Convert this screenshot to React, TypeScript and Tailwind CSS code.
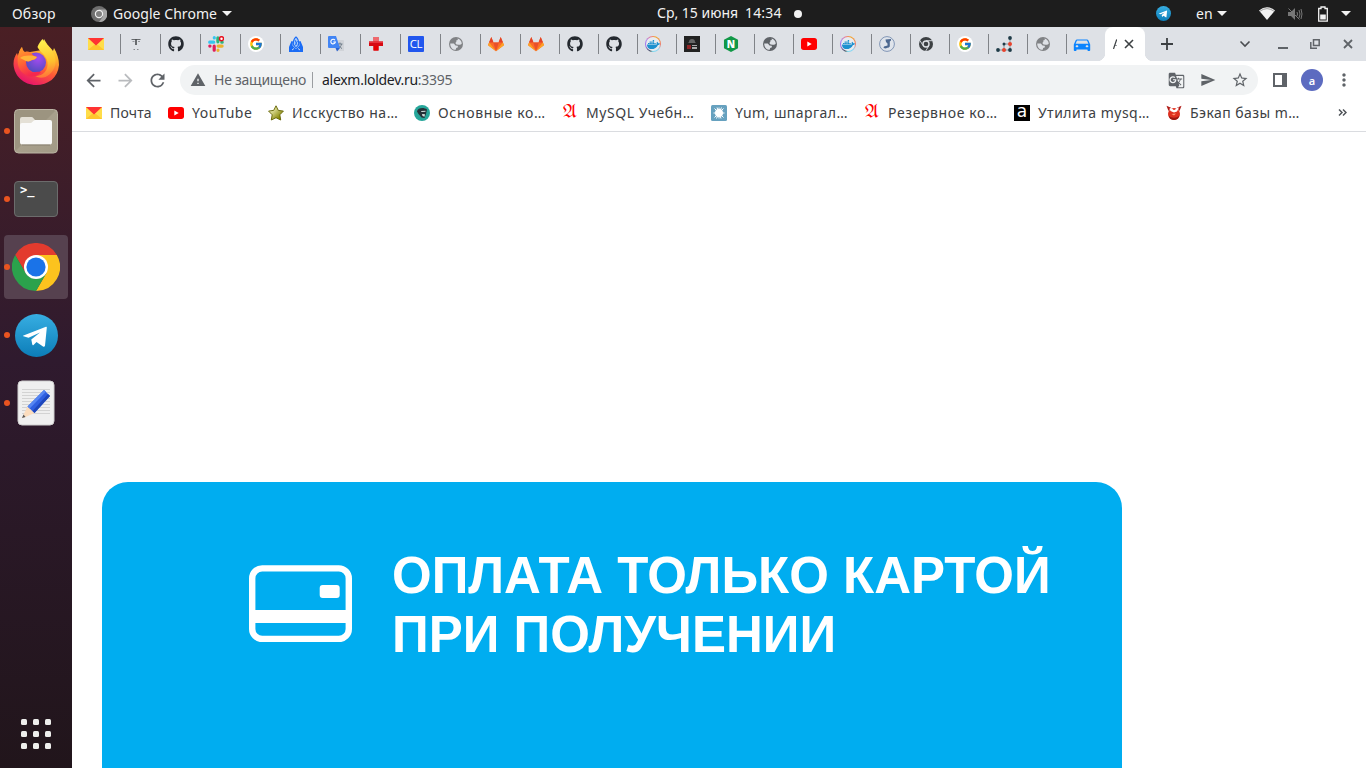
import React from "react";
import { FcGoogle } from "react-icons/fc";
import { FaGithub, FaDocker } from "react-icons/fa";
import { MdArrowBack, MdArrowForward, MdRefresh, MdWarning, MdGTranslate, MdSend, MdStarBorder, MdMoreVert, MdDirectionsCar } from "react-icons/md";

const MailIcon = () => (
  <svg viewBox="0 0 16 16" className="size-4">
    <rect y="2" width="16" height="12" fill="#ffc933" />
    <path d="M0 2v12l8-6zM16 2v12L8 8z" fill="#ffdd4a" />
    <path d="M0 14l6-5h4l6 5z" fill="#ffc62e" />
    <path d="M0 2h16L8 9.6z" fill="#f33" />
  </svg>
);

const MaskIcon = () => (
  <svg viewBox="0 0 16 16" className="size-4" stroke="#4a4d50" fill="none">
    <path d="M3.500 3.500h9" strokeOpacity=".8" />
    <path d="M4.500 5.500h2M10 5.500h2" strokeOpacity=".5" />
    <path d="M8 3v6" strokeWidth="1.600" />
    <path d="M5.500 13.500h1.500M9 13.500h1.500" strokeOpacity=".6" />
  </svg>
);

const SlackIcon = () => (
  <svg viewBox="0 0 16 16" className="size-4" strokeWidth="3.200" strokeLinecap="round">
    <path d="M1.700 6.200h4M6.300 1.700v.2" stroke="#36c5f0" />
    <path d="M9.900 1.800v4M13.800 6.200h.4" stroke="#2eb67d" />
    <path d="M14.100 10.100h-4M10 14.200v.1" stroke="#ecb22e" />
    <path d="M6.200 14.200v-4M1.800 10.100h.2" stroke="#e01e5a" />
    <circle cx="13.500" cy="2.700" r="2" fill="#fff" stroke="#e8101f" strokeWidth="1.500" />
  </svg>
);

const GoogleIcon = () => (
  <span className="flex size-4 items-center justify-center rounded-full bg-white">
    <FcGoogle className="size-[14px]" />
  </span>
);

const HandsIcon = () => (
  <svg viewBox="0 0 16 16" className="size-4">
    <path d="M1 16V11l2.500-6 1.500.5-.5 4L8 13l3.500-3.500-.5-4 1.500-.5L15 11v5z" fill="#1b6cf5" />
    <path d="M8 1C6 2.500 5 5 5.500 9L8 12l2.500-3C11 5 10 2.500 8 1z" fill="#a9cbfa" stroke="#1b6cf5" strokeWidth="1.100" />
    <path d="M7 4l2 5M9.500 5L6.500 10" stroke="#1b6cf5" strokeWidth=".9" />
    <path d="M4 14l2-1.500M12 14l-2-1.500" stroke="#dee1e6" strokeWidth=".9" />
  </svg>
);

const TranslateIcon = () => (
  <svg viewBox="0 0 16 16" className="size-4">
    <path d="M6 4h9a1 1 0 011 1v10H9z" fill="#d0d3d8" />
    <path d="M9.500 8h5M12 6.500v1.500M13.600 8c-.5 2-1.800 3.600-3.200 4.600M10.800 9.500l3.200 3.200" stroke="#6f7d8a" fill="none" />
    <path d="M1 0h7l4 12H1a1 1 0 01-1-1V1a1 1 0 011-1z" fill="#4285f4" />
    <path d="M7.500 12H12l-3 3.500z" fill="#2a62cf" />
    <path d="M7 4.200A2.300 2.300 0 107.400 6H5.300" stroke="#fff" strokeWidth="1.100" fill="none" />
  </svg>
);

const CrossIcon = () => (
  <svg viewBox="0 0 16 16" className="size-4">
    <path d="M5.500 1h5v4.500H15V10h-4.500v4.500h-5V10H1V5.500h4.500z" fill="#d60a12" />
    <path d="M5.500 1h5v4.500h-5z" fill="#f0686c" />
    <path d="M1 5.500h14V7H1z" fill="#e8323a" />
    <path d="M5.500 10h5v4.500h-5z" fill="#e60000" />
  </svg>
);

const ClIcon = () => (
  <span className="flex size-4 items-center justify-center rounded-[1px] bg-[#2156ee] font-['Open_Sans',sans-serif] text-[11.500px] leading-none tracking-[-0.3px] text-white">CL</span>
);

const Globe = ({ color }: { color: string }) => (
  <svg viewBox="0 0 16 16" className="size-4">
    <circle cx="8" cy="8" r="7" fill={color} />
    <path d="M9.600 2.400c2.600.8 4 2.700 4.200 5-1 1.300-2 1.600-3.100 1.300l-2.200-.1-1.200-1.500 1.100-1.300-.2-1.300 1.600-.5z" fill="#dee1e6" />
    <path d="M2.200 7.400l3.600.1 1.700 2.100 2.200.1.300 1.500-1.800.9-.5 1.700c-3 .1-5.400-2.400-5.500-6.400z" fill="#dee1e6" />
  </svg>
);
const GlobeGrey = () => <Globe color="#808285" />;
const GlobeDark = () => <Globe color="#5f6368" />;

const GitlabIcon = () => (
  <svg viewBox="0 0 16 16" className="size-4">
    <path d="M8 15.200L.4 9.600a.7.700 0 01-.3-.8L3.300 1l2.200 5.600h5L12.700 1l3.200 7.800a.7.700 0 01-.3.800z" fill="#fc6d26" />
    <path d="M3.300 1l2.200 5.600H1zM12.700 1l-2.200 5.600H15z" fill="#e24329" />
    <path d="M8 15.200L5.200 6.600h5.600z" fill="#e8502a" />
    <path d="M1.200 6.600L.1 8.800a.7.700 0 00.3.800L8 15.200zM14.800 6.600l1.100 2.200a.7.700 0 01-.3.800L8 15.200z" fill="#fca326" />
  </svg>
);

const GithubIcon = () => <FaGithub className="size-4 text-[#24292f]" />;

const DockerIcon = () => (
  <span className="flex size-4 items-center justify-center rounded-full bg-[conic-gradient(from_20deg,#f5a623,#f07a6a_20%,#8fd4f5_32%,#7bd9ee_45%,#384d54_50%,#9b6be8_65%,#b08af0_78%,#ef7b8b_90%,#f5a623)]">
    <span className="flex size-[14px] items-center justify-center rounded-full bg-[#e6ebf0]">
      <FaDocker className="size-[13px] text-[#1c90cf]" />
    </span>
  </span>
);

const DarkIcon = () => (
  <svg viewBox="0 0 16 16" className="size-4">
    <rect width="16" height="16" fill="#222" />
    <path d="M5 6c0-2 1-3 3-3s3 1 3 3l1 1H4z" fill="#666" />
    <path d="M3 9h4v4H3z" fill="#8f2426" />
    <path d="M8 9h5v1H8zM8 11h5v2H8z" fill="#a9a9a9" />
  </svg>
);

const NginxIcon = () => (
  <span className="flex size-4 items-center justify-center bg-[#119847] font-['Open_Sans',sans-serif] text-[10px] leading-none font-extrabold text-white [clip-path:polygon(50%_0,94%_24%,94%_76%,50%_100%,6%_76%,6%_24%)]">N</span>
);

const YoutubeIcon = () => (
  <svg viewBox="0 0 16 16" className="size-4">
    <rect y="2" width="16" height="12" rx="2.700" fill="#f00" />
    <path d="M6.300 5.500v5L10.700 8z" fill="#fff" />
  </svg>
);

const ElephantIcon = () => (
  <svg viewBox="0 0 16 16" className="size-4">
    <circle cx="8" cy="8" r="7.400" fill="#dfe4eb" stroke="#8095b5" />
    <path d="M6.500 3.500l5.500-.5v1.500l-1.200 1v4.500c0 2-3.300 1.500-3.800 2.500l-2.500-.5.500-1.500 3.500-1V7.500L7 6z" fill="#4c6890" />
  </svg>
);

const ChromeTab = () => (
  <svg viewBox="0 0 16 16" className="size-4">
    <circle cx="8" cy="8" r="7" fill="#3c4043" />
    <circle cx="8" cy="8" r="3.700" fill="#dee1e6" />
    <circle cx="8" cy="8" r="2.300" fill="#3c4043" />
    <path d="M8 4.700h6.500M5 9.600L1.900 4.400M10.900 9.700L7.600 15.200" stroke="#dee1e6" strokeWidth=".9" />
  </svg>
);

const DotsIcon = () => (
  <svg viewBox="0 0 16 16" className="size-4">
    <path d="M2 14h12V2M8 14V8h6" stroke="#6d7f87" strokeWidth=".8" fill="none" />
    <g fill="#1f3b47"><circle cx="2" cy="14" r="1.900" /><circle cx="14" cy="14" r="1.900" /><circle cx="14" cy="2" r="1.900" /><circle cx="8" cy="8" r="1.500" /></g>
    <g fill="#e8432e"><circle cx="8" cy="14" r="2" /><circle cx="14" cy="8" r="2" /></g>
  </svg>
);

const CarIcon = () => <MdDirectionsCar className="-ml-[2px] h-[19px] w-5 shrink-0 scale-x-115 scale-y-90 text-[#0a84ff]" />;

const wideTabs = [MailIcon, MaskIcon, GithubIcon, SlackIcon, GoogleIcon, HandsIcon, TranslateIcon, CrossIcon, ClIcon, GlobeGrey, GitlabIcon];
const narrowTabs = [GitlabIcon, GithubIcon, GithubIcon, DockerIcon, DarkIcon, NginxIcon, GlobeDark, YoutubeIcon, DockerIcon, ElephantIcon, ChromeTab, GoogleIcon, DotsIcon, GlobeGrey, CarIcon];

const StarIcon = () => (
  <svg viewBox="0 0 16 16" className="size-4">
    <defs><linearGradient id="olive" x1="0" y1="0" x2="1" y2="1"><stop offset=".2" stopColor="#f0f0b8" /><stop offset=".8" stopColor="#858500" /></linearGradient></defs>
    <path d="M8 .8l2.300 4.600 5.100.7-3.600 3.700.9 5.200L8 12.700 3.300 15l.9-5.200L.6 6.100l5.100-.7z" fill="url(#olive)" stroke="#6b6b0e" strokeLinejoin="round" />
  </svg>
);

const TealIcon = () => (
  <svg viewBox="0 0 16 16" className="size-4">
    <circle cx="8" cy="8" r="8" fill="#26a69a" />
    <path d="M3 6.500C3.500 2.500 10 2 13 4.500L12 9l-1.500 4-3-.5L4.500 9z" fill="#263238" />
    <path d="M7 6l4.500-.2v1L7.500 7zM8 9l3 .2-.5 2.500L8.500 11z" fill="#d7e3e2" />
  </svg>
);

const GothicA = () => (
  <span className="flex size-4 items-center justify-center font-['DejaVu_Math_TeX_Gyre','DejaVu_Sans',serif] text-[17px] leading-none text-[#f00]">𝔄</span>
);

const YumIcon = () => (
  <svg viewBox="0 0 16 16" className="size-4">
    <rect width="16" height="16" rx="1.500" fill="#66a1bf" />
    <circle cx="8" cy="8" r="4" fill="#fff" />
    <path d="M8 2.500v11M2.500 8h11M3.500 3.500l9 9M12.500 3.500l-9 9M6 2.500l4 11M10.500 2.500l-5 11" stroke="#fff" />
  </svg>
);

const BlackA = () => (
  <span className="flex size-4 items-center justify-center bg-black pb-[3px] font-['DejaVu_Sans',sans-serif] text-[17px] leading-none text-white">a</span>
);

const DevilIcon = () => (
  <svg viewBox="0 0 16 16" className="size-4">
    <path d="M.5.8l4.500 2L2.500 6zM15.500.8l-4.500 2L13.500 6z" fill="#b01a16" />
    <circle cx="8" cy="9" r="6" fill="#e0301f" />
    <path d="M2.500 10.500c1.500 6 9.500 6 11 0-3 3-8 3-11 0z" fill="#9a1712" />
    <path d="M3.500 3.500C6 2.500 7 5 8 5c1.500 0 2.500-3 5-2.500L11 6.500 8 7.500 4.500 6z" fill="#fff" />
    <path d="M5.500 9l4.500-.5-2 2z" fill="#ff9a78" />
  </svg>
);

const bookmarks = [
  { Icon: MailIcon, text: "Почта", box: "w-[82px]", track: "tracking-[0.15px]" },
  { Icon: YoutubeIcon, text: "YouTube", box: "w-[100px]", track: "tracking-[0.55px]" },
  { Icon: StarIcon, text: "Исскуство на…", box: "w-[146px]", track: "tracking-[0.55px]" },
  { Icon: TealIcon, text: "Основные ко…", box: "w-[148px]", track: "tracking-[0.7px]" },
  { Icon: GothicA, text: "MySQL Учебн…", box: "w-[149px]", track: "tracking-[0.55px]" },
  { Icon: YumIcon, text: "Yum, шпаргал…", box: "w-[153px]", track: "tracking-[0.45px]" },
  { Icon: GothicA, text: "Резервное ко…", box: "w-[150px]", track: "tracking-[0.6px]" },
  { Icon: BlackA, text: "Утилита mysq…", box: "w-[152px]", track: "tracking-[0.5px]" },
  { Icon: DevilIcon, text: "Бэкап базы m…", box: "w-[172px]", track: "tracking-[0.45px]" },
];

const Firefox = () => (
  <svg viewBox="0 0 48 48" className="size-12">
    <defs>
      <linearGradient id="ffBody" x1=".8" y1="0" x2=".3" y2="1"><stop stopColor="#fff44f" /><stop offset=".3" stopColor="#ffb32c" /><stop offset=".6" stopColor="#ff5a36" /><stop offset="1" stopColor="#e6106e" /></linearGradient>
      <linearGradient id="ffTail" x1=".5" y1="0" x2=".6" y2="1"><stop stopColor="#fff44f" /><stop offset=".6" stopColor="#ffc02e" /><stop offset="1" stopColor="#ff7139" /></linearGradient>
      <radialGradient id="ffGlobe" cx=".6" cy=".3" r=".8"><stop stopColor="#a44bf0" /><stop offset="1" stopColor="#4a4bb8" /></radialGradient>
      <linearGradient id="ffFox" x1="0" y1="0" x2=".4" y2="1"><stop stopColor="#ffa62b" /><stop offset=".5" stopColor="#ff6a33" /><stop offset="1" stopColor="#f5284f" /></linearGradient>
    </defs>
    <path d="M10 8c.5 3 1.500 5 3 6l5-1 12-2c0-4 .500-7 2-11 3 6 6 8 9 12l1-3c3 5 5 11 5 17-1 13-11 20-23 20S2 37 1.500 25c0-5 1.500-8 3.500-11l1 3c1-4 2-7 4-9z" fill="url(#ffBody)" />
    <circle cx="24" cy="23.500" r="10" fill="url(#ffGlobe)" />
    <path d="M30.500 0c4 7 11 10 13 20 1 9-4 15-10 18-4 1-7 1-10-1 8 0 13-6 12-14-1-7-8-10-10-15 1-3 3-6 5-8z" fill="url(#ffTail)" />
    <path d="M10 8c.5 3 1.500 4 3 5 3-1 6 0 7 2 1 2 4 2 5 3-1 2-3 3-5 3-2 1-3 2-6 1-2 4 0 9 5 11 4 1 6-1 10 0-4 6-13 6-18 1-5-4-6-10-5-17 1-4 2-7 4-9z" fill="url(#ffFox)" />
    <path d="M8 19c4-3 11-3 17-1-1 2-3 3-5 3-2 1-3 2-6 1z" fill="#ffb43a" />
  </svg>
);

const Files = () => (
  <svg viewBox="0 0 48 48" className="size-12">
    <defs><linearGradient id="fileBg" x1="0" y1="0" x2="1" y2="1"><stop stopColor="#9c9480" /><stop offset=".48" stopColor="#9c9480" /><stop offset=".5" stopColor="#a8a08c" /><stop offset="1" stopColor="#a29a86" /></linearGradient></defs>
    <rect x="2.500" y="2.500" width="43" height="43.500" rx="4" fill="url(#fileBg)" stroke="#bbb5a4" />
    <path d="M8 18v-6q0-2 2-2h9.500q1 0 2 1.300l1.500 1.700v5z" fill="#e4e0d6" />
    <path d="M8 18q0-2 2-2h8.500q1 0 2-1.200T23 13h15q2 0 2 2v20.500q0 2-2 2H10q-2 0-2-2z" fill="#fafafa" />
    <path d="M10 38h28" stroke="#81796a" strokeWidth=".8" />
  </svg>
);

const Terminal = () => (
  <div className="flex h-9 w-11 items-start rounded-[4px] border border-[#6c6c6c] bg-[#4b4b4b] pt-px pl-[5px] font-['DejaVu_Sans_Mono',monospace] text-[12px] leading-[15px] font-bold text-white">&gt;_</div>
);

const Chrome = () => (
  <svg viewBox="0 0 48 48" className="size-12">
    <path d="M24 12h20.800A24 24 0 0124 48l10.400-18z" fill="#fcc31e" />
    <path d="M3.200 12l10.400 18L24 24 24 12h20.800A24 24 0 003.200 12z" fill="#e33b2e" />
    <path d="M3.200 12l10.400 18c3 5 11 9 20.800 0L24 48A24 24 0 013.200 12z" fill="#2ba24c" />
    <circle cx="24" cy="24" r="12" fill="#fff" />
    <circle cx="24" cy="24" r="9.600" fill="#1a73e8" />
  </svg>
);

const Telegram = ({ className }: { className: string }) => (
  <svg viewBox="0 0 43 43" className={className}>
    <defs><linearGradient id="tg" x1="0" y1="0" x2="0" y2="1"><stop stopColor="#37aee2" /><stop offset="1" stopColor="#0c7db8" /></linearGradient></defs>
    <circle cx="21.500" cy="21.500" r="21.500" fill="url(#tg)" />
    <path d="M8.500 21.500L31 12.800q1-.2.800 1L30 31.800q-.5 1.500-2 .8l-6.500-4.600-3 3q-1 .9-1.300-1l-.9-4.400L25 18.500l-11.500 5.300-5-1.500q-1.400-.2 0-.8z" fill="#fff" />
  </svg>
);

const Editor = () => (
  <svg viewBox="0 0 48 48" className="size-12">
    <rect x="6" y="2" width="36" height="44" rx="4" fill="#efefef" stroke="#cfcfcf" />
    <path d="M10 10.500h28M10 13.500h28M10 16.500h28M10 19.500h28M10 22.500h28M10 25.500h28M10 28.500h28M10 31.500h28M10 34.500h28" stroke="#ccc" strokeWidth=".8" />
    <path d="M15.500 27.500l7 6.500-9.500 4.300-3 .5z" fill="#fbdcbd" />
    <path d="M11.500 35.500l2 2.500-3.500 1z" fill="#555" />
    <path d="M15.500 27.500L32 11l6 6-15.500 17z" fill="#2f5fe0" />
    <path d="M15.500 27.500L32 11l2 1.800-16.300 16.700z" fill="#5585f2" />
    <path d="M20.500 32L36 15l2 2-15.500 17z" fill="#1d46bb" />
  </svg>
);

const dock = [
  { name: "firefox", icon: <Firefox />, running: false, active: false },
  { name: "files", icon: <Files />, running: true, active: false },
  { name: "terminal", icon: <Terminal />, running: true, active: false },
  { name: "chrome", icon: <Chrome />, running: true, active: true },
  { name: "telegram", icon: <Telegram className="size-[43px]" />, running: true, active: false },
  { name: "editor", icon: <Editor />, running: true, active: false },
];

const Caret = () => <svg viewBox="0 0 10 5" className="h-[5px] w-[10px]"><path d="M0 0h10L5 5z" fill="#f2f2f2" /></svg>;

function TopBar() {
  return (
    <header className="grid h-[27px] shrink-0 grid-cols-[657px_1fr_210px] items-center bg-[#1d1d1d] text-[14px] leading-none text-[#f2f2f2]">
      <div className="flex items-center pl-3">
        <span className="w-[79px] tracking-[0.2px] whitespace-nowrap">Обзор</span>
        <svg viewBox="0 0 16 16" className="size-4">
          <circle cx="8" cy="8" r="8" fill="#6e6e6e" />
          <path d="M8 3.500h7A8 8 0 018 16l4-5.500z" fill="#a6a6a6" />
          <circle cx="8" cy="8" r="3.600" fill="#808080" stroke="#f0f0f0" strokeWidth="1.200" />
        </svg>
        <span className="ml-[6px] w-[109px] tracking-[0.05px] whitespace-nowrap">Google Chrome</span>
        <Caret />
      </div>
      <div className="flex items-center">
        <span className="w-[88px] pb-[2px] whitespace-nowrap">Ср, 15 июня</span>
        <span className="w-[49px] pb-[2px] tracking-[0.15px] whitespace-nowrap">14:34</span>
        <span className="size-2 rounded-full bg-[#f2f2f2]" />
      </div>
      <div className="flex items-center">
        <Telegram className="size-[15px]" />
        <span className="ml-[25px] w-[21px]">en</span>
        <Caret />
        <svg viewBox="0 0 16 13" className="ml-[32px] h-[13px] w-4"><path d="M0 3.500Q8-3 16 3.500L8 13z" fill="#f2f2f2" /><path d="M1 4.200Q8-1 15 4.200" stroke="#1d1d1d" strokeWidth=".8" fill="none" opacity=".5" /></svg>
        <svg viewBox="0 0 16 14" className="ml-3 h-[14px] w-4"><path d="M1 5h3l4-4v12L4 9H1z" fill="#777" /><path d="M10 5q1 2 0 4M12 3q2 4 0 8M14 2q2 5 0 10M1.500 1.500l11 11" stroke="#777" fill="none" /></svg>
        <svg viewBox="0 0 10 16" className="ml-[15px] h-4 w-[10px]"><path d="M3 1h4v1.500h2.300v12.700H.700V2.500H3z" fill="none" stroke="#f2f2f2" strokeWidth="1.300" /><path d="M2.200 8.500h5.600v5H2.200z" fill="#f2f2f2" /></svg>
        <span className="ml-[13px]"><Caret /></span>
      </div>
    </header>
  );
}

function Dock() {
  return (
    <nav className="flex w-[72px] shrink-0 flex-col items-center bg-linear-to-b from-[#4a1f24] via-[#2f1a2e] via-45% to-[#21151b] pt-1">
      <div className="flex flex-col gap-1">
        {dock.map((d) => (
          <div key={d.name} className={d.active ? "relative flex size-16 items-center justify-center rounded-[4px] bg-[#56414f]" : "relative flex size-16 items-center justify-center"}>
            {d.running && <span className="absolute top-[29px] left-0 size-[6px] rounded-full bg-[#e95420]" />}
            {d.icon}
          </div>
        ))}
      </div>
      <div className="mt-auto mb-[19px] grid grid-cols-3 gap-[6px]">
        {[0, 1, 2, 3, 4, 5, 6, 7, 8].map((i) => <span key={i} className="size-[6px] rounded-[1.500px] bg-[#eeeeec]" />)}
      </div>
    </nav>
  );
}

function Tab({ Icon, first, width }: { Icon: React.ComponentType; first?: boolean; width: string }) {
  return (
    <div className={`${width} flex h-5 shrink-0 items-center border-l pl-[7px] ${first ? "border-transparent" : "border-[#808388]"}`}>
      <Icon />
    </div>
  );
}

function TabStrip() {
  return (
    <div className="flex h-[34px] items-center bg-[#dee1e6] pl-2 text-[#3c4043]">
      {wideTabs.map((Icon, i) => <Tab key={i} Icon={Icon} first={i === 0} width="w-10" />)}
      {narrowTabs.map((Icon, i) => <Tab key={i} Icon={Icon} width="w-[39px]" />)}
      <div className="relative flex h-[34px] w-10 shrink-0 items-center rounded-t-[8px] bg-white pl-2">
        <span className="absolute bottom-0 -left-2 size-2 bg-[radial-gradient(circle_at_0_0,#dee1e6_8px,#fff_8.500px)]" />
        <span className="absolute -right-2 bottom-0 size-2 bg-[radial-gradient(circle_at_100%_0,#dee1e6_8px,#fff_8.500px)]" />
        <svg viewBox="0 0 4 10" className="h-[10px] w-1 shrink-0" fill="none" stroke="#3c4043"><path d="M.5 10L3.700.5" strokeWidth="1.200" /><path d="M1.800 6.500H4" strokeOpacity=".5" /></svg>
        <svg viewBox="0 0 10 10" className="ml-[7px] size-[10px] shrink-0" stroke="#3c4043" strokeWidth="1.600"><path d="M1 1l8 8M9 1L1 9" /></svg>
      </div>
      <svg viewBox="0 0 12 12" className="ml-4 size-3 shrink-0" stroke="#3c4043" strokeWidth="1.800"><path d="M6 0v12M0 6h12" /></svg>
      <svg viewBox="0 0 12 8" className="ml-[66px] h-2 w-3 shrink-0" fill="none" stroke="#4a4d51" strokeWidth="1.600"><path d="M1.500 1.500L6 6l4.500-4.500" /></svg>
      <span className="mt-2 ml-[27px] h-[2px] w-[10px] bg-[#5f6368]" />
      <svg viewBox="0 0 10 10" className="ml-[22px] size-[10px]" fill="none" stroke="#5f6368" strokeWidth="1.500"><path d="M3.500.8h5.700v5.700H3.500zM.8 3v6.200H7" /></svg>
      <svg viewBox="0 0 10 10" className="ml-[23px] size-[10px]" stroke="#5f6368" strokeWidth="1.800"><path d="M1 1l8 8M9 1L1 9" /></svg>
    </div>
  );
}

function Toolbar() {
  return (
    <div className="flex h-[38px] items-center pl-[11px] text-[14px] leading-none text-[#5f6368]">
      <MdArrowBack className="size-[21px] shrink-0" />
      <MdArrowForward className="ml-[11px] size-[21px] shrink-0 text-[#b9bbbe]" />
      <MdRefresh className="ml-[11px] size-[21px] shrink-0" />
      <div className="ml-3 flex h-[30px] w-[1078px] shrink-0 items-center rounded-full bg-[#f1f3f4] pl-[10px]">
        <MdWarning className="size-4" />
        <span className="ml-2 w-[98px] tracking-[-0.25px] whitespace-nowrap">Не защищено</span>
        <span className="h-4 w-px bg-[#9a9da1]" />
        <span className="ml-[9px] flex-1 tracking-[-0.28px] whitespace-nowrap"><span className="text-[#202124]">alexm.loldev.ru</span>:3395</span>
        <MdGTranslate className="size-[17px]" />
        <MdSend className="ml-[15px] size-4" />
        <MdStarBorder className="mr-[9px] ml-[15px] size-[18px]" />
      </div>
      <svg viewBox="0 0 14 14" className="ml-[15px] size-[14px] shrink-0"><path d="M1 1h12v12H1z" fill="none" stroke="#5f6368" strokeWidth="2" /><path d="M9 1h4v12H9z" fill="#5f6368" /></svg>
      <span className="ml-[14px] flex size-[22px] shrink-0 items-center justify-center rounded-full bg-[#5c6bc0] text-[11px] font-semibold text-white">a</span>
      <MdMoreVert className="ml-[11px] size-5 shrink-0" />
    </div>
  );
}

function Bookmarks() {
  return (
    <div className="flex h-[33px] items-center border-b border-[#dadce0] pb-[5px] pl-[14px] text-[14px] leading-none text-[#3c4043]">
      {bookmarks.map(({ Icon, text, box, track }) => (
        <div key={text} className={`${box} flex shrink-0 items-center gap-2`}>
          <span className="shrink-0"><Icon /></span>
          <span className={`${track} whitespace-nowrap`}>{text}</span>
        </div>
      ))}
      <svg viewBox="0 0 9 7" className="size-[9px]" fill="none" stroke="#4f5358" strokeWidth="1.500"><path d="M1 .5l3 3-3 3M5 .5l3 3-3 3" /></svg>
    </div>
  );
}

function PaymentCard() {
  return (
    <section className="mt-[350px] ml-[30px] flex h-[400px] w-[1020px] items-start rounded-[26px] bg-[#00adf0] pt-16 pl-[147px]">
      <svg viewBox="0 0 103 77" className="mt-[19px] h-[77px] w-[103px] shrink-0">
        <rect x="3.200" y="3.400" width="96.600" height="70.600" rx="10" fill="none" stroke="#fff" strokeWidth="6.400" />
        <path d="M3 45h97v13H3z" fill="#fff" />
        <rect x="70.700" y="20" width="20" height="13" rx="3" fill="#fff" />
      </svg>
      <h1 className="ml-10 font-['Liberation_Sans',Arial,sans-serif] text-[51px] leading-[59px] font-bold whitespace-nowrap text-white">
        ОПЛАТА ТОЛЬКО КАРТОЙ<br />ПРИ ПОЛУЧЕНИИ
      </h1>
    </section>
  );
}

export default function App() {
  return (
    <div className="flex h-screen w-full flex-col overflow-hidden bg-white font-['Noto_Sans','Open_Sans',sans-serif]">
      <TopBar />
      <div className="flex min-h-0 flex-1">
        <Dock />
        <main className="min-w-0 flex-1 overflow-hidden">
          <TabStrip />
          <Toolbar />
          <Bookmarks />
          <PaymentCard />
        </main>
      </div>
    </div>
  );
}
